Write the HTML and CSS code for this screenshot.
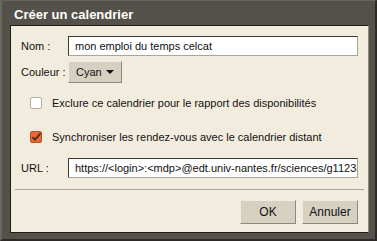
FILE: index.html
```html
<!DOCTYPE html>
<html>
<head>
<meta charset="utf-8">
<link rel="stylesheet" href="styles.css">
</head>
<body>
<div class="dialog">
  <div class="title">Créer un calendrier</div>
  <div class="panel">
    <div class="row row-nom">
      <span class="label">Nom :</span>
      <div class="input">mon emploi du temps celcat</div>
    </div>
    <div class="row row-color">
      <span class="label">Couleur :</span>
      <div class="select">Cyan<span class="caret"></span></div>
    </div>
    <div class="check-row check1">
      <span class="box"></span>
      <span class="check-label">Exclure ce calendrier pour le rapport des disponibilités</span>
    </div>
    <div class="check-row check2">
      <span class="box checked"><svg width="12" height="12" viewBox="0 0 12 12"><path d="M2.5 6.2 L5 8.7 L10.5 2.3" fill="none" stroke="#5a2614" stroke-width="1.8"/></svg></span>
      <span class="check-label">Synchroniser les rendez-vous avec le calendrier distant</span>
    </div>
    <div class="row row-url">
      <span class="label">URL :</span>
      <div class="input">https://&lt;login&gt;:&lt;mdp&gt;@edt.univ-nantes.fr/sciences/g1123-celcat.ics</div>
    </div>
    <div class="sep"></div>
    <div class="buttons">
      <div class="btn">OK</div>
      <div class="btn">Annuler</div>
    </div>
  </div>
</div>
</body>
</html>
```

FILE: styles.css
```css
html, body {
  margin: 0;
  padding: 0;
  background: #54514a;
}
body {
  width: 377px;
  height: 241px;
  overflow: hidden;
  font-family: "Liberation Sans", Arial, sans-serif;
  font-size: 11px;
  color: #111;
}
.dialog {
  box-sizing: border-box;
  width: 377px;
  height: 241px;
  background: #54514a;
  border-top: 1px solid #67645c;
  border-left: 2px solid #6a675f;
  border-right: 2px solid #2c2b27;
  border-bottom: 2px solid #2c2b27;
}
.title {
  height: 21px;
  padding: 3px 0 0 12px;
  line-height: 22px;
  font-size: 13px;
  font-weight: bold;
  color: #ffffff;
}
.panel {
  box-sizing: border-box;
  margin-left: 8px;
  width: 359px;
  height: 208px;
  background: #f2ecde;
  border-top: 1px solid #1c1b19;
  border-left: 1px solid #1c1b19;
  border-bottom: 1px solid #1c1b19;
  border-right: 1px solid #8f8b80;
  padding: 0 10px 0 10px;
}
.row {
  display: flex;
  align-items: center;
}
.label {
  width: 47px;
  flex: none;
}
.row-nom { margin-top: 10px; height: 20px; }
.row-color { margin-top: 5px; height: 22px; }
.row-url { margin-top: 12px; height: 20px; }
.input {
  box-sizing: border-box;
  width: 290px;
  height: 20px;
  background: #fff;
  border-top: 1px solid #3a3a38;
  border-left: 1px solid #3a3a38;
  border-right: 1px solid #a9a598;
  border-bottom: 1px solid #a9a598;
  padding: 0 0 0 6px;
  line-height: 18px;
  white-space: nowrap;
  overflow: hidden;
}
.select {
  box-sizing: border-box;
  height: 22px;
  width: 54px;
  background: #d6d0c1;
  border-top: 1px solid #efebe0;
  border-left: 1px solid #efebe0;
  border-right: 1px solid #8c887c;
  border-bottom: 1px solid #8c887c;
  display: flex;
  align-items: center;
  padding-left: 7px;
}
.caret {
  width: 0;
  height: 0;
  margin-left: 4px;
  border-left: 4px solid transparent;
  border-right: 4px solid transparent;
  border-top: 4px solid #111;
}
.check-row {
  display: flex;
  align-items: center;
  height: 18px;
  padding-left: 9px;
}
.check1 { margin-top: 11px; }
.check2 { margin-top: 16px; }
.box {
  box-sizing: border-box;
  width: 12px;
  height: 12px;
  border: 1px solid #b4aea3;
  border-radius: 2px;
  background: #ffffff;
  flex: none;
  margin-right: 10px;
  position: relative;
}
.box.checked {
  background: #e36b3b;
  border-color: #b9522b;
}
.box svg {
  position: absolute;
  left: -1px;
  top: -1px;
}
.sep {
  margin: 11px -6px 0 -6px;
  height: 1px;
  background: #a9a598;
}
.buttons {
  margin-top: 10px;
  display: flex;
  justify-content: flex-end;
  gap: 6px;
}
.btn {
  box-sizing: border-box;
  width: 56px;
  height: 24px;
  background: #d6d0c1;
  border-top: 1px solid #efebe0;
  border-left: 1px solid #efebe0;
  border-right: 1px solid #8c887c;
  border-bottom: 1px solid #8c887c;
  display: flex;
  align-items: center;
  justify-content: center;
  font-size: 12px;
}
```
